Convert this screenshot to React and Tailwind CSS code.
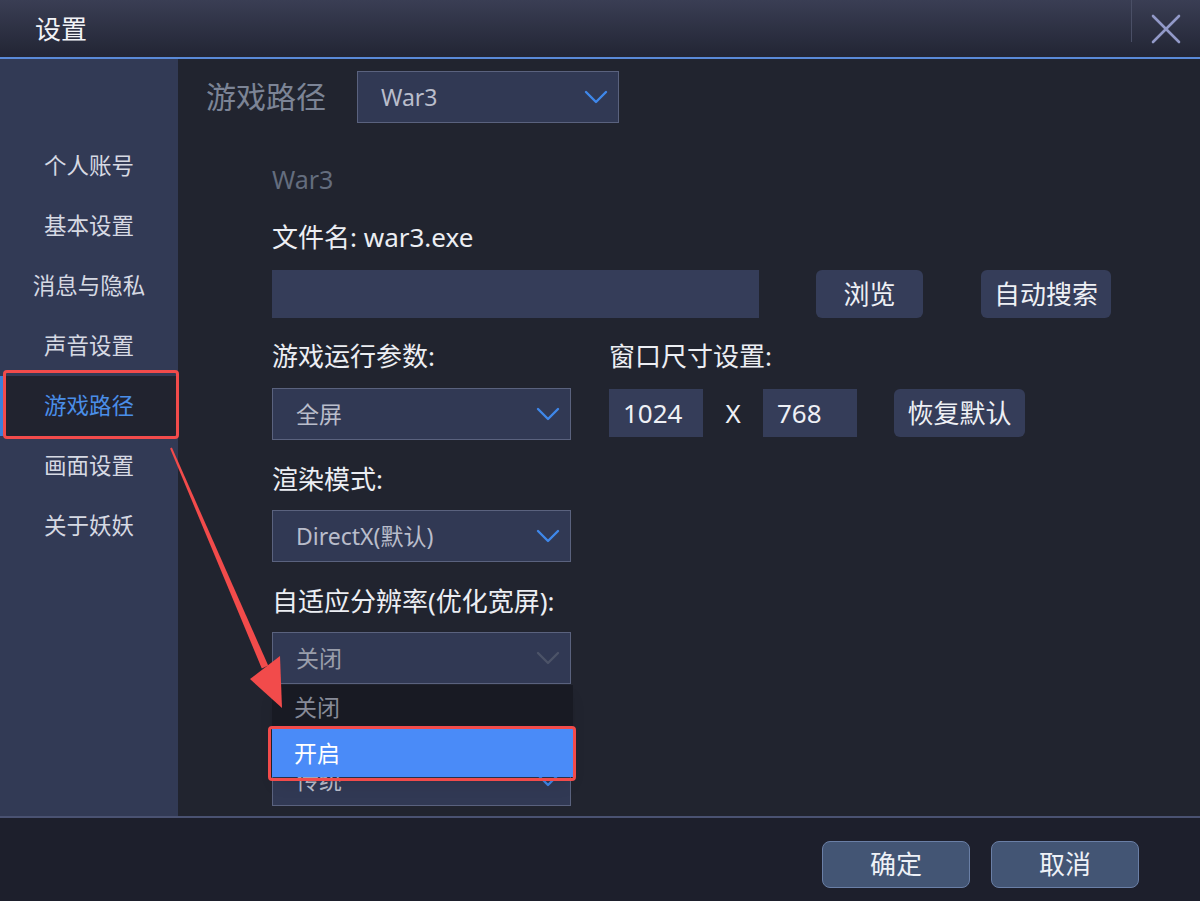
const font = "font-['Noto_Sans','Noto_Sans_CJK_SC',sans-serif]";

const menu = ['个人账号', '基本设置', '消息与隐私', '声音设置', '游戏路径', '画面设置', '关于妖妖'];

function Chevron({ color }) {
    return (
        <svg width="26" height="16" viewBox="0 0 26 16">
            <path d="M3 3 L13 13 L23 3" fill="none" stroke={color} strokeWidth="2.4" strokeLinecap="round" strokeLinejoin="round" />
        </svg>
    );
}

function Select({ value, width = 'w-[299px]', dim = false }) {
    return (
        <div className={`${width} h-[52px] flex items-center justify-between border border-[#5a627e] bg-[#313954] pl-[23px] pr-[9px]`}>
            <span className={`text-[23px] leading-[30px] ${dim ? 'text-[#9a9eab]' : 'text-[#b9bdcb]'}`}>{value}</span>
            <Chevron color={dim ? '#4c5368' : '#3f87ea'} />
        </div>
    );
}

function Label({ children, className = 'text-[#eceef3] text-[26px]' }) {
    return <div className={`h-[36px] leading-[36px] ${className}`}>{children}</div>;
}

function Box({ children, className = '' }) {
    return (
        <div className={`h-[48px] flex items-center bg-[#353d59] text-[26px] text-[#eef0f5] ${className}`}>
            {children}
        </div>
    );
}

export default function App() {
    return (
        <div className={`relative w-[1200px] h-[901px] overflow-hidden flex flex-col bg-[#21242f] ${font}`}>
            {/* title bar */}
            <div className="h-[57px] flex items-center justify-between bg-gradient-to-b from-[#3a3e54] to-[#222534]">
                <div className="pl-[35px] text-[26px] leading-[36px] text-[#f2f3f7]">设置</div>
                <div className="flex h-full">
                    <div className="w-[1px] h-[42px] bg-[#4a4f66]" />
                    <div className="w-[68px] h-full flex items-center justify-center">
                        <svg width="30" height="30" viewBox="0 0 30 30">
                            <path d="M2 2 L28 28 M28 2 L2 28" stroke="#9299c8" strokeWidth="2.6" strokeLinecap="round" />
                        </svg>
                    </div>
                </div>
            </div>
            <div className="h-[2px] bg-[#5a8ad8]" />

            <div className="flex flex-1 min-h-0">
                {/* sidebar */}
                <div className="w-[178px] bg-[#323a55] pt-[77px]">
                    {menu.map((m) => (
                        <div
                            key={m}
                            className={`h-[60px] flex items-center justify-center text-[22.5px] ${
                                m === '游戏路径'
                                    ? 'bg-[#21232f] text-[#4a8ee8] border-l-4 border-[#3d7fd8] pr-[4px]'
                                    : 'text-[#d6d9e3]'
                            }`}
                        >
                            {m}
                        </div>
                    ))}
                </div>

                {/* main */}
                <div className="relative flex-1 bg-[#21242f]">
                    <div className="flex items-center pl-[28px] pt-[12px]">
                        <div className="text-[30px] leading-[40px] text-[#7c8496] w-[151px]">游戏路径</div>
                        <Select value="War3" width="w-[262px]" />
                    </div>

                    <div className="pl-[94px] pt-[38px]">
                        <Label className="text-[25px] text-[#646d7e]">War3</Label>
                        <Label className="mt-[22px] text-[26px] text-[#eceef3]">文件名: war3.exe</Label>
                        <div className="mt-[15px] flex items-center">
                            <div className="w-[487px] h-[48px] bg-[#353d59]" />
                            <Box className="ml-[57px] w-[107px] justify-center rounded-md">浏览</Box>
                            <Box className="ml-[58px] w-[130px] justify-center rounded-md">自动搜索</Box>
                        </div>

                        <div className="mt-[20px] flex">
                            <div className="w-[299px]">
                                <Label>游戏运行参数:</Label>
                                <div className="mt-[14px]">
                                    <Select value="全屏" />
                                </div>
                            </div>
                            <div className="ml-[38px]">
                                <Label>窗口尺寸设置:</Label>
                                <div className="mt-[15px] flex items-center">
                                    <Box className="w-[94px] pl-[14px]">1024</Box>
                                    <div className="w-[60px] text-center text-[26px] text-[#eef0f5]">X</div>
                                    <Box className="w-[94px] pl-[14px]">768</Box>
                                    <Box className="ml-[37px] w-[131px] justify-center rounded-md">恢复默认</Box>
                                </div>
                            </div>
                        </div>

                        <Label className="mt-[21px] text-[26px] text-[#eceef3]">渲染模式:</Label>
                        <div className="mt-[13px]">
                            <Select value="DirectX(默认)" />
                        </div>

                        <Label className="mt-[21px] text-[26px] text-[#eceef3]">自适应分辨率(优化宽屏):</Label>
                        <div className="mt-[13px]">
                            <Select value="关闭" dim />
                        </div>

                        <div className="mt-[70px]">
                            <Select value="传统" />
                        </div>
                    </div>

                    {/* open dropdown list */}
                    <div className="absolute left-[94px] top-[626px] w-[301px] shadow-lg">
                        <div className="h-[44px] flex items-center pl-[22px] bg-[#181a23] text-[23px] text-[#878b98]">关闭</div>
                        <div className="h-[48px] flex items-center pl-[22px] bg-[#4a8bf8] text-[23px] text-white">开启</div>
                    </div>
                </div>
            </div>

            {/* footer */}
            <div className="h-[2px] bg-[#4a5272]" />
            <div className="h-[83px] bg-[#1d1f2c] flex items-start justify-end pt-[23px] pr-[61px] gap-[21px]">
                <button className="w-[148px] h-[47px] rounded-lg border border-[#6a7fa6] bg-[#435574] text-[26px] text-[#eef1f7]">确定</button>
                <button className="w-[148px] h-[47px] rounded-lg border border-[#6a7fa6] bg-[#435574] text-[26px] text-[#eef1f7]">取消</button>
            </div>

            {/* annotation overlays */}
            <div className="absolute left-[3px] top-[370px] w-[176px] h-[69px] border-[3px] border-[#f24b4b] rounded-sm pointer-events-none" />
            <div className="absolute left-[268px] top-[726px] w-[308px] h-[55px] border-[3px] border-[#f24b4b] rounded-sm pointer-events-none" />
            <svg className="absolute left-0 top-0 pointer-events-none" width="1200" height="901">
                <polygon points="170.1,448.4 171.9,447.6 268.2,665.6 261.8,668.4" fill="#f24b4b" />
                <polygon points="250,679 280,656 282,708" fill="#f24b4b" />
            </svg>
        </div>
    );
}
